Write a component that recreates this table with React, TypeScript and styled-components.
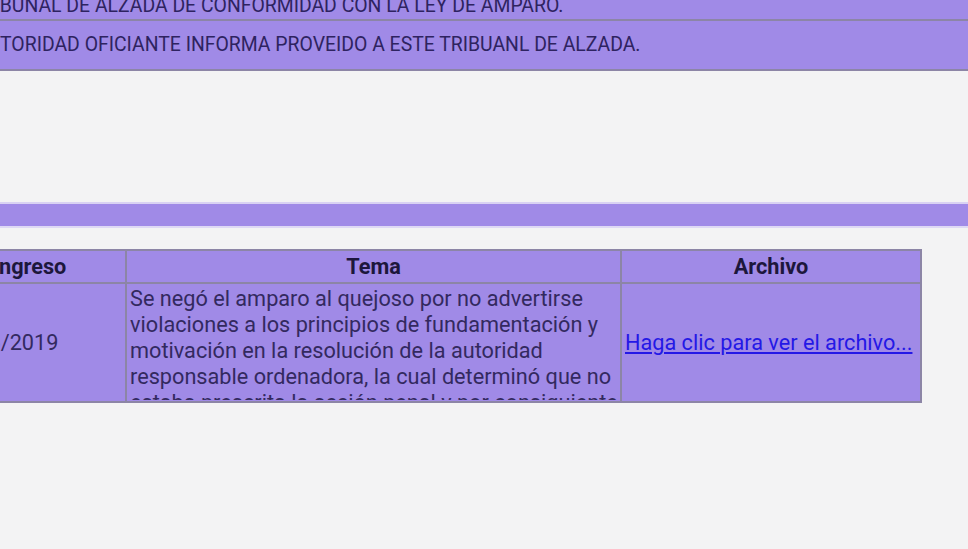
import React from "react";
import styled, { createGlobalStyle } from "styled-components";

const Global = createGlobalStyle`
  html, body {
    margin: 0;
    padding: 0;
    background: #f3f3f4;
    overflow: hidden;
  }
  body {
    font-family: Roboto, "Liberation Sans", Arial, sans-serif;
    color: #2c2258;
  }
`;

const PURPLE = "#a08ae7";
const LINE = "#8c85a6";

const Page = styled.div`
  width: 968px;
  height: 549px;
  overflow: hidden;
  display: flex;
  flex-direction: column;
`;

const Notices = styled.section`
  margin-left: -40px;
  display: flex;
  flex-direction: column;
`;

const NoticeRow = styled.div<{ $height: number; $align: "center" | "flex-end"; $pb: number; $shift: number }>`
  height: ${(p) => p.$height}px;
  box-sizing: border-box;
  padding: 0 0 ${(p) => p.$pb}px ${(p) => 40 + p.$shift}px;
  background: ${PURPLE};
  border-bottom: 2px solid ${LINE};
  display: flex;
  align-items: ${(p) => p.$align};
  font-size: 19.4px;
  line-height: 12px;
  color: #2e2360;
  white-space: nowrap;
`;

const Band = styled.div`
  margin-top: 133px;
  margin-left: -20px;
  height: 22px;
  background: ${PURPLE};
  box-shadow: 0 -2px 0 #d9d2f3, 0 2px 0 #ded8f5;
`;

const Table = styled.table`
  margin-top: 23px;
  margin-left: -68px;
  width: 988px;
  table-layout: fixed;
  border-collapse: collapse;
  background: ${PURPLE};
  font-size: 21.7px;
`;

const Th = styled.th`
  border: 2px solid ${LINE};
  height: 31px;
  padding: 0 2px;
  font-weight: 700;
  color: #1d173c;
  line-height: 26px;
  text-align: center;
`;

const Td = styled.td<{ $pl?: number }>`
  border: 2px solid ${LINE};
  padding: 2px 2px 1px ${(p) => p.$pl ?? 3}px;
  vertical-align: middle;
  color: #33295f;
  line-height: 26px;
`;

const Clip = styled.div`
  height: 114px;
  overflow: hidden;
`;

const FileLink = styled.a`
  color: #2418e6;
  text-decoration: underline;
  cursor: pointer;
  white-space: nowrap;
`;

export default function App() {
  return (
    <>
      <Global />
      <Page>
        <Notices>
          <NoticeRow $height={21} $align="flex-end" $pb={7} $shift={-29}>
            TRIBUNAL DE ALZADA DE CONFORMIDAD CON LA LEY DE AMPARO.
          </NoticeRow>
          <NoticeRow $height={50} $align="center" $pb={0} $shift={-25}>
            AUTORIDAD OFICIANTE INFORMA PROVEIDO A ESTE TRIBUANL DE ALZADA.
          </NoticeRow>
        </Notices>
        <Band />
        <Table>
          <colgroup>
            <col style={{ width: 193 }} />
            <col style={{ width: 495 }} />
            <col style={{ width: 300 }} />
          </colgroup>
          <thead>
            <tr>
              <Th>Ingreso</Th>
              <Th>Tema</Th>
              <Th>Archivo</Th>
            </tr>
          </thead>
          <tbody>
            <tr>
              <Td $pl={9}>12/06/2019</Td>
              <Td>
                <Clip>
                  Se negó el amparo al quejoso por no advertirse violaciones a los principios de
                  fundamentación y motivación en la resolución de la autoridad responsable
                  ordenadora, la cual determinó que no estaba prescrita la acción penal y por
                  consiguiente la orden de aprehensión se encontraba ajustada a derecho.
                </Clip>
              </Td>
              <Td>
                <FileLink>Haga clic para ver el archivo...</FileLink>
              </Td>
            </tr>
          </tbody>
        </Table>
      </Page>
    </>
  );
}
